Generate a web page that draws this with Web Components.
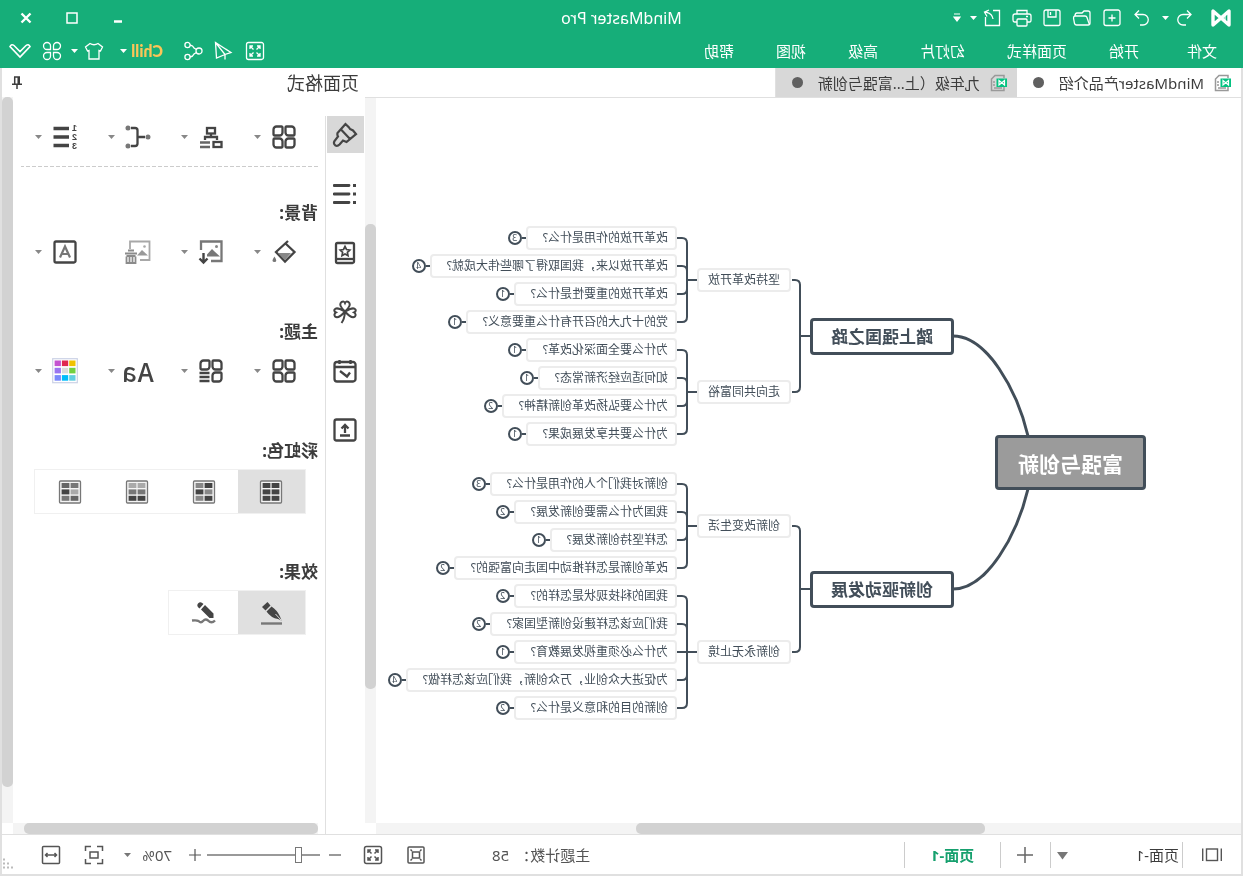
<!DOCTYPE html>
<html lang="zh-CN">
<head>
<meta charset="utf-8">
<title>MindMaster Pro</title>
<style>
  html, body { margin: 0; height: 100%; overflow: hidden; }
  body {
    font-family: "Noto Sans", "Noto Sans CJK SC", sans-serif;
    font-size: 15px; line-height: 20px; color: #3c3c3c; background: #fff;
    --green: #16ae79; --line: #e0e0e0; --track: #f4f4f4; --thumb: #d2d2d2; --ink: #424e59; --icon: #444;
  }
</style>
</head>
<body>
<mm-app></mm-app>

<script>
const sq = (x, y, r) => {
  const c = { tl: 'M1 0H6A3 3 0 0 1 9 3V8A1 1 0 0 1 8 9H3A3 3 0 0 1 0 6V1A1 1 0 0 1 1 0Z',
              tr: 'M3 0H8A1 1 0 0 1 9 1V6A3 3 0 0 1 6 9H1A1 1 0 0 1 0 8V3A3 3 0 0 1 3 0Z' }[r];
  return `<path transform="translate(${x} ${y})" d="${c}"/>`;
};
const swatches = (cells) => `<rect x="1.5" y="1" width="21" height="22" rx="1" fill="#f4f4f4" stroke="#777" stroke-width="1.3"/>` +
  cells.map((c, i) => `<rect x="${i % 2 ? 12.6 : 3.6}" y="${3 + Math.floor(i / 2) * 6.4}" width="7.8" height="5" fill="${c}" stroke="none"/>`).join('');
const palette = ['#f0c200', '#e0284f', '#c452d0', '#72d040', '#dcdcdc', '#9a74f0', '#62cfe0', '#00bdfb', '#7a88fb'];

/* name: [width, height, markup] */
const ICONS = {
  logo: [22, 20, '<path d="M3 3V17L19 3V17Z" stroke-width="3.4" stroke-linejoin="round"/><path d="M6 6V14L9.5 10.5Z" fill="currentColor" stroke="none" opacity=".6"/>'],
  undo: [20, 20, '<path d="M7 2.5L3 6.5L7 10.5M3 6.5H11A5 5 0 0 1 11 17H8"/>'],
  redo: [20, 20, '<path d="M13 2.5L17 6.5L13 10.5M17 6.5H9A5 5 0 0 0 9 17H12"/>'],
  create: [20, 20, '<rect x="2" y="2" width="16" height="15.5" rx="2"/><path d="M10 6.5V13.5M6.5 10H13.5"/>'],
  open: [20, 20, '<path d="M2 15V5Q2 3 4 3H8L10 5H15Q17 5 17 8"/><path d="M4 17H15.5Q17 17 17.5 15.5L18.5 10Q18.5 8 17 8H7Q5.5 8 5 9.5L3.5 14Q2 17 4 17ZM2 15Q2 17 4 17"/>'],
  save: [20, 20, '<path d="M4 2H16Q18 2 18 4V16Q18 17.5 16.5 17.5H3.5Q2 17.5 2 16V4Q2 2 4 2ZM6 2V9H14V2M11.5 4V7"/>'],
  print: [20, 20, '<path d="M5 6V2.5H15V6M5 14H2.5Q1 14 1 12V8Q1 6 3 6H17Q19 6 19 8V12Q19 14 17.5 14H15"/><rect x="5" y="11" width="10" height="7" rx="1"/><path d="M4 8.5H6"/>'],
  exporting: [20, 20, '<path d="M9 2.5H2.5V17.5H16.5V9"/><path d="M9 11Q10 5 17 4M13 2L17.5 4L15 8.5"/>'],
  caret: [8, 6, '<path d="M0 1H7L3.5 5Z" fill="currentColor" stroke="none"/>'],
  bigcaret: [12, 10, '<path d="M0 1H11L5.5 8.5Z" fill="currentColor" stroke="none"/>'],
  more: [8, 10, '<path d="M1 1H7M1 4H7L4 8Z" fill="currentColor" stroke-width="1.2"/>'],
  min: [12, 12, '<path d="M2 9.5H10" stroke-width="2.5"/>'],
  max: [12, 12, '<rect x="1" y="1" width="10" height="10" stroke-width="1.5"/>'],
  close: [12, 12, '<path d="M1.5 1.5L10.5 10.5M10.5 1.5L1.5 10.5" stroke-width="2.4"/>'],
  full: [20, 20, '<rect x="1.5" y="1.5" width="17" height="17" rx="2"/><path d="M5 8V5H8M12 5H15V8M15 12V15H12M8 15H5V12M5 5L8.5 8.5M15 5L11.5 8.5M15 15L11.5 11.5M5 15L8.5 11.5"/>'],
  send: [20, 20, '<path d="M17.5 1.5L2 11.5L8 13.5L16.5 17ZM17.5 1.5L8 13.5V18.5"/>'],
  share: [20, 20, '<circle cx="15.5" cy="4" r="2.6"/><circle cx="4" cy="10" r="3"/><circle cx="15.5" cy="16" r="2.6"/><path d="M6.5 8.5L9 7Q10 4.5 13 4M6.5 11.5L9 13Q10 15.5 13 16"/>'],
  shirt: [20, 20, '<path d="M6 2.5Q10 5 14 2.5L18.5 6L16.5 10L15 9.5V18H5V9.5L3.5 10L1.5 6Z"/>'],
  clover: [20, 20, '<path d="M8.5 8.5H5A3.5 3.5 0 1 1 8.5 5ZM11.5 8.5V5A3.5 3.5 0 1 1 15 8.5ZM8.5 11.5V15A3.5 3.5 0 1 1 5 11.5ZM11.5 11.5H15A3.5 3.5 0 1 1 11.5 15Z"/>'],
  chevron: [24, 20, '<path d="M2 5.5Q3.5 2.5 6 4.5L12 10.5L18 4.5Q20.5 2.5 22 5.5L12 16Z" stroke-width="1.6"/>'],
  doc: [18, 18, '<path d="M4 4V1.5H13L16.5 5V16.5H4V13" stroke="#999" stroke-width="1.5"/><path d="M13 8H15M13 11H15M6 14H14" stroke="#999"/><rect x="1" y="4.5" width="10.5" height="8.5" fill="#04c281" stroke="none"/><path d="M3.5 11V6.5L9 11V6.5Z" stroke="#fff" stroke-width="1.2"/>'],
  pin: [12, 14, '<path d="M3 1H9M4 1V8M8.3 1V8M1 8.3H11M6 8V13" stroke-width="1.5"/><path d="M4.3 1V8" stroke-width="2.5"/>'],
  brush: [26, 26, '<path d="M12.5 2L20.5 11Q21 13 20 14.5L23.5 19Q25 22 22.5 23.5Q20.5 24.5 18.5 22.5L15 18.5L11.5 20L2 12L5 8.5L8 7L9 5.5Z M17 7.5L8 17" stroke-width="2.2"/>'],
  list: [24, 24, '<path d="M8 3.5H23M8 12H23M8 20.5H23" stroke-width="2.8" stroke-linecap="round"/><path d="M1 3.5H4M1 12H4M1 20.5H4" stroke-width="3"/>'],
  book: [24, 24, '<rect x="3" y="2" width="18" height="20" rx="1.5"/><path d="M3 18H21"/><path d="M12 5.5L13.5 8.5L16.8 9L14.4 11.3L15 14.6L12 13L9 14.6L9.6 11.3L7.2 9L10.5 8.5Z" stroke-width="1.7"/>'],
  leaf: [24, 24, '<path d="M12 11.5C7.5 7.5 6 4 8.5 2Q11 .8 12 3Q13 .8 15.5 2C18 4 16.5 7.5 12 11.5ZM12 11.5C17 9 20.5 7 22.5 9.5Q23.3 11.5 21 12.5Q23.5 14 22 16.5C19.5 18.5 15 15 12 11.5ZM12 11.5C7 9 3.5 7 1.5 9.5Q.7 11.5 3 12.5Q.5 14 2 16.5C4.5 18.5 9 15 12 11.5ZM12 12Q12.5 19 15.5 23" stroke-width="2"/>'],
  calendar: [24, 24, '<rect x="1.5" y="3" width="21" height="19.5" rx="2.5"/><path d="M1.5 8H22.5M6.5 1V5M17.5 1V5M7 13.5L10 17.5L17 12"/>'],
  upload: [24, 24, '<rect x="1.5" y="1.5" width="21" height="21" rx="2"/><path d="M7 17.5H17M12 15V8M8.5 10.5L12 7L15.5 10.5"/>'],
  squares: [24, 24, sq(1.5, 1.5, 'tr') + sq(13.5, 1.5, 'tl') + sq(1.5, 13.5, 'tl') + sq(13.5, 13.5, 'tr')],
  squaresList: [24, 24, sq(1.5, 1.5, 'tr') + sq(13.5, 1.5, 'tl') + sq(1.5, 13.5, 'tl') + '<path d="M13.5 14H23.5M13.5 18H23.5M13.5 22H23.5"/>'],
  org: [24, 24, '<rect x="8" y="3" width="8" height="5.5"/><path d="M12 8.5V12M6 15V12H18V15"/><rect x="1.5" y="17" width="8" height="5"/><path d="M13 17.5H23M13 22H23" stroke="#666"/>'],
  bracket: [26, 24, '<path d="M6 12H13M20 3H16Q13.5 3 13.5 5.5V18.5Q13.5 21 16 21H20"/><g fill="#777" stroke="none"><circle cx="3" cy="12" r="2.5"/><circle cx="23" cy="3" r="2.5"/><circle cx="23" cy="21" r="2.5"/></g>'],
  numbers: [26, 28, '<path d="M9 5.5H24.5M9 14H24.5M9 22.5H24.5" stroke-width="3.4"/><g fill="currentColor" stroke="none" font-size="9" font-weight="700" font-family="Liberation Sans, sans-serif"><text x="1" y="8">1</text><text x="1" y="17">2</text><text x="1" y="26">3</text></g>'],
  bucket: [26, 26, '<path d="M9 2L21 13L12 22.5L2.5 13L11.5 4.5"/><path d="M6 14H19L12 21Z" fill="#888" stroke="none"/><path d="M22.5 17.5Q26.5 23 22.5 23Q19 23 22.5 17.5Z" fill="#777" stroke="none"/>'],
  picture: [26, 26, '<path d="M13 22H2.5V2.5H23V11" stroke="#777"/><path d="M4 17.5L10 12L12 10L17 15.5V17.5Z" fill="#777" stroke="none"/><circle cx="7.5" cy="7.5" r="1.5" fill="#888" stroke="none"/><path d="M20.5 14V23M16.5 19.5L20.5 23.5L24.5 19.5" stroke-width="2.4"/>'],
  pictureDel: [28, 26, '<g opacity=".85"><path d="M12 21H2.5V2.5H22V10" stroke="#999" stroke-width="1.8"/><path d="M4 16.5L10 11L15 16.5Z" fill="#888" stroke="none"/><circle cx="7.5" cy="7.5" r="1.3" fill="#999" stroke="none"/><path d="M15 14.5H27M18 11.5H24M16.5 17.5V24H25.5V17.5M19.5 17V24M22.5 17V24M16.5 17H25.5" stroke="#777" stroke-width="1.8"/></g>'],
  boxA: [24, 24, '<rect x="1.5" y="1.5" width="21" height="21" rx="1.5"/><path d="M7 17.5L12 6.5L17 17.5M9 14H15" stroke="#777" stroke-width="2.2"/>'],
  colors: [26, 26, '<rect x=".7" y=".7" width="24.6" height="24" fill="#fff" stroke="#ccd2e6" stroke-width="1.2"/>' + palette.map((c, i) => `<rect x="${2.5 + (i % 3) * 7.3}" y="${2.5 + Math.floor(i / 3) * 7.3}" width="6.3" height="5.6" fill="${c}" stroke="none"/>`).join('')],
  rainbow1: [24, 24, swatches(['#444', '#444', '#444', '#444', '#444', '#444'])],
  rainbow2: [24, 24, swatches(['#444', '#888', '#888', '#444', '#444', '#888'])],
  rainbow3: [24, 24, swatches(['#aaa', '#aaa', '#777', '#777', '#444', '#444'])],
  rainbow4: [24, 24, swatches(['#777', '#666', '#aaa', '#444', '#666', '#777'])],
  pen: [26, 26, '<path d="M2 23.5H23" stroke="#777" stroke-width="2.4"/><g fill="currentColor" stroke="none"><path d="M13.5 5.5L16.5 2L22 7L18.5 10.5Z"/><path d="M12.5 6.5L17.5 11.5Q13 18 6 19L2.5 20.5L4 16.5Q7 10 12.5 6.5Z"/></g><path d="M3 20L8.5 14" stroke="#e0e0e0" stroke-width="1"/>'],
  pencil: [28, 26, '<path d="M3 20.5Q6.5 24 10 20.5Q12.5 18.5 15 21Q17 23.5 19.5 21Q21 20 26 20.5" stroke="#777" stroke-width="2.4"/><path d="M4.5 17.5V13.5L13 5L17 9.5L8.5 18H4.5ZM14.5 4Q17.5 1 20 3.5Q22 6 18.5 8.5Z" fill="currentColor" stroke="none"/>'],
  outline: [22, 16, '<rect x="5.5" y="2" width="11" height="11.5" stroke-width="1.4"/><path d="M1.7 1.5V14M20.3 1.5V14" stroke-width="1.4"/>'],
  plus: [18, 18, '<path d="M9 1V17M1 9H17" stroke-width="1.5"/>'],
  plusSmall: [14, 14, '<path d="M7 1V13M1 7H13" stroke-width="1.2"/>'],
  minus: [14, 14, '<path d="M1 7H13" stroke-width="1.2"/>'],
  fit: [20, 20, '<rect x="2" y="2" width="16" height="16" rx="1"/><rect x="6.5" y="7" width="7" height="6"/><path d="M4.5 4.5L6 6M15.5 4.5L14 6M4.5 15.5L6 14M15.5 15.5L14 14"/>'],
  focus: [20, 20, '<path d="M1.5 6V1.5H7M13 1.5H18.5V6M18.5 14V18.5H13M7 18.5H1.5V14"/><rect x="6" y="7" width="8" height="6"/>'],
  width: [20, 20, '<rect x="1.5" y="1.5" width="17" height="17" rx="1"/><path d="M4.5 10H15.5M6.5 8L4.5 10L6.5 12M13.5 8L15.5 10L13.5 12"/>'],
  grip: [10, 12, '<path d="M8 1.5H10M4 5.5H6M8 5.5H10M0 9.5H2M4 9.5H6M8 9.5H10" stroke="#bbb" stroke-width="2"/>']
};

class Base extends HTMLElement {
  connectedCallback() {
    if (this.shadowRoot) return;
    this.attachShadow({ mode: 'open' }).innerHTML = `<style>
      *, *::before { box-sizing: border-box; }
      button, select, input { font: inherit; color: inherit; background: none; border: 0; margin: 0; padding: 0; border-radius: 0; }
      button { display: flex; align-items: center; justify-content: center; flex: none; white-space: nowrap; }
      ${this.css()}</style>${this.html()}`;
  }
  css() { return ':host { display: block; }'; }
  html() { return '<slot></slot>'; }
}
const def = (name, cls) => customElements.define(name, cls);
const ico = (n) => `<mm-icon name="${n}"></mm-icon>`;
const btn = (n, label, cls = '') => `<button type="button" class="${cls}" aria-label="${label}">${ico(n)}</button>`;

def('mm-icon', class extends Base {
  css() { return ':host { display: block; flex: none; } svg { display: block; stroke-width: var(--sw, 1.3px); }'; }
  html() {
    const n = this.getAttribute('name'), [w, h, body] = ICONS[n];
    return `<svg width="${w}" height="${h}" viewBox="0 0 ${w} ${h}" fill="none" stroke="currentColor" aria-hidden="true">${body}</svg>`;
  }
});

def('mm-titlebar', class extends Base {
  css() { return `
    :host { display: grid; grid-template-columns: 1fr auto 1fr; align-items: center; height: 36px; color: #fff; }
    .quick { display: flex; align-items: center; padding-left: 12px; }
    .quick button { width: 30px; height: 30px; }
    .quick .logo { width: 20px; margin-right: 12px; }
    .quick .drop { width: 8px; }
    .quick .drop + button { margin-left: 4px; }
    .quick .more { width: 16px; }
    h1 { margin: 0; font-size: 16px; line-height: 24px; font-weight: 400; }
    .win { display: flex; justify-content: flex-end; padding-right: 3px; }
    .win button { width: 46px; height: 32px; }`; }
  html() { return `
    <div class="quick"><button type="button" class="logo" aria-label="MindMaster">${ico('logo')}</button>
      ${btn('undo', '撤销')}${btn('caret', '撤销列表', 'drop')}${btn('redo', '恢复')}${btn('create', '新建')}${btn('open', '打开')}${btn('save', '保存')}${btn('print', '打印')}${btn('exporting', '导出')}${btn('caret', '导出列表', 'drop')}${btn('more', '更多', 'more')}</div>
    <h1>MindMaster Pro</h1>
    <div class="win">${btn('min', '最小化')}${btn('max', '最大化')}${btn('close', '关闭')}</div>`; }
});

def('mm-menubar', class extends Base {
  css() { return `
    :host { display: flex; align-items: center; justify-content: space-between; height: 32px; color: #fff; padding: 0 4px 2px 26px; }
    nav { display: flex; gap: 42px; }
    nav button:first-child { margin-right: 6px; }
    .tools { display: flex; align-items: center; }
    .tools button { width: 30px; height: 28px; }
    .tools .wide { width: 34px; }
    .tools .drop { width: 12px; }
    .tools .chill { width: 34px; margin-left: 15px; justify-content: flex-start; color: #fbc558; font-weight: 900; font-family: Lato, sans-serif; font-size: 16px; }
    .tools .shirt { width: 28px; margin-left: 9px; }
    .tools .last { width: 32px; }`; }
  html() { return `
    <nav>${['文件', '开始', '页面样式', '幻灯片', '高级', '视图', '帮助'].map(t => `<button type="button">${t}</button>`).join('')}</nav>
    <div class="tools">${btn('full', '全屏', 'wide')}${btn('send', '发送')}${btn('share', '分享')}<button type="button" class="chill">Chill</button>${btn('caret', '账户', 'drop')}${btn('shirt', '皮肤', 'shirt')}${btn('caret', '皮肤列表', 'drop')}${btn('clover', '应用', 'last')}${btn('chevron', '收起', 'last')}</div>`; }
});

def('mm-tab', class extends Base {
  css() { return `
    :host { display: block; flex: none; }
    button { height: 29px; padding: 0 16px 0 9px; gap: 10px; }
    :host([idle]) button { background: #d8d8d8; }
    :host([idle]) { border-right: 1px solid var(--line); }
    i { width: 11px; height: 11px; border-radius: 50%; background: #606060; margin-left: 5px; }`; }
  html() { return `<button type="button" role="tab" aria-selected="${!this.hasAttribute('idle')}">${ico('doc')}<span><slot></slot></span><i></i></button>`; }
});

def('mm-scrollbar', class extends Base {
  css() { return `
    :host { display: flex; background: var(--track); }
    :host([dir=v]) { flex-direction: column; width: 11px; }
    :host([dir=h]) { height: 11px; }
    .pre { flex: var(--pre) 1 0px; } .thumb { flex: var(--size) 1 0px; border-radius: 5px; background: var(--thumb); } .post { flex: var(--post) 1 0px; }`; }
  html() { return '<div class="pre"></div><div class="thumb"></div><div class="post"></div>'; }
});

def('mind-leaf', class extends Base {
  css() { return `
    :host { display: flex; align-items: center; height: 24px; font-size: 12px; line-height: 16px; color: var(--ink); white-space: nowrap; }
    .box { height: 24px; padding: 2px 15px 2px 7px; border: 2px solid #ececec; border-radius: 4px; background: #fff; }
    .dash { width: 4px; height: 2px; background: var(--ink); }
    .count { width: 14px; height: 14px; border: 2px solid var(--ink); border-radius: 50%; font-size: 9px; line-height: 10px; text-align: center; }`; }
  html() { return `<span class="box"><slot></slot></span><span class="dash"></span><span class="count">${this.getAttribute('n')}</span>`; }
});

def('mind-branch', class extends Base {
  css() { return `
    :host { display: flex; align-items: center; gap: 20px; color: var(--ink); white-space: nowrap; }
    .node { flex: none; width: 94px; height: 24px; border: 2px solid #ececec; border-radius: 4px; background: #fff; display: flex; align-items: center; justify-content: center; font-size: 12px; line-height: 16px; }
    :host([main]) { gap: 19px; }
    :host([main]) .node { width: 144px; height: 37px; border: 3px solid var(--ink); border-radius: 4px; font-size: 17px; line-height: 24px; font-weight: 700; font-family: "Noto Sans CJK SC", sans-serif; }
    /* centre on the two sub-topics when the lower one holds an extra leaf */
    :host([tail]) .node { margin-bottom: 14px; }
    .kids { display: flex; flex-direction: column; gap: 4px; }`; }
  html() { return `<div class="node">${this.getAttribute('label')}</div><div class="kids"><slot></slot></div>`; }
});

const MAP = [
  ['踏上强国之路', [
    ['坚持改革开放', [['改革开放的作用是什么?', 3], ['改革开放以来，我国取得了哪些伟大成就?', 4], ['改革开放的重要性是什么?', 1], ['党的十九大的召开有什么重要意义?', 1]]],
    ['走向共同富裕', [['为什么要全面深化改革?', 1], ['如何适应经济新常态?', 1], ['为什么要弘扬改革创新精神?', 2], ['为什么要共享发展成果?', 1]]]]],
  ['创新驱动发展', [
    ['创新改变生活', [['创新对我们个人的作用是什么?', 3], ['我国为什么需要创新发展?', 2], ['怎样坚持创新发展?', 1], ['改革创新是怎样推动中国走向富强的?', 2]]],
    ['创新永无止境', [['我国的科技现状是怎样的?', 2], ['我们应该怎样建设创新型国家?', 2], ['为什么必须重视发展教育?', 1], ['为促进大众创业，万众创新，我们应该怎样做?', 4], ['创新的目的和意义是什么?', 2]]]]]
];
/* Rounded bracket from (x, y) to every child centre in ys, ending at x2. */
const bracket = (x, y, trunk, x2, ys) => `M${x} ${y}H${trunk}` + ys.map(c =>
  Math.abs(c - y) < 2 ? `M${trunk} ${y}H${x2}` : `M${trunk} ${y}V${c < y ? c + 5 : c - 5}Q${trunk} ${c} ${trunk + 5} ${c}H${x2}`).join('');

def('mind-map', class extends Base {
  css() { return `
    :host { display: block; position: relative; overflow: hidden; background: #fff; }
    .stage { position: absolute; left: 95px; top: 128px; width: 760px; }
    svg { position: absolute; left: 0; top: 0; }
    .root { position: absolute; left: 0; top: 209px; width: 151px; height: 55px; border: 3px solid var(--ink); border-radius: 4px; background: #9b9b9b; color: #fff; display: flex; align-items: center; justify-content: center; font: 700 21px/28px "Noto Sans CJK SC", sans-serif; }
    .tree { position: relative; display: flex; flex-direction: column; gap: 26px; padding-left: 192px; }`; }
  html() {
    const s = (a, n) => Array.from({ length: n }, (_, i) => a + i * 28);
    const lines = bracket(433, 336, 443, 451, [280, 392]) + bracket(433, 589, 443, 451, [526, 652]) +
      bracket(546, 280, 556, 566, s(238, 4)) + bracket(546, 392, 556, 566, s(350, 4)) +
      bracket(546, 526, 556, 566, s(484, 4)) + bracket(546, 652, 556, 566, s(596, 5));
    return `<div class="stage">
      <svg width="600" height="494" viewBox="97 226 600 494" fill="none" stroke="#424e59" stroke-width="2" aria-hidden="true">
        <path stroke-width="3" d="M215 436C226 390 256 336 290 336M215 489C226 535 256 589 290 589"/><path d="${lines}"/></svg>
      <div class="root">富强与创新</div>
      <div class="tree">${MAP.map(([m, subs]) => `<mind-branch main ${subs[1][1].length > subs[0][1].length ? 'tail' : ''} label="${m}">${subs.map(([t, ls]) =>
        `<mind-branch label="${t}">${ls.map(([l, n]) => `<mind-leaf n="${n}">${l}</mind-leaf>`).join('')}</mind-branch>`).join('')}</mind-branch>`).join('')}</div>
    </div>`;
  }
});

def('mm-workspace', class extends Base {
  css() { return `
    :host { display: flex; flex-direction: column; flex: 1; min-width: 0; }
    .tabs { display: flex; border-bottom: 1px solid var(--line); }
    .view { flex: 1; display: grid; grid-template: 1fr 11px / 1fr 11px; min-height: 0; }
    .v { --pre: 126; --size: 465; --post: 134; } .h { --pre: 256; --size: 349; --post: 260; }`; }
  html() { return `
    <div class="tabs" role="tablist"><mm-tab>MindMaster产品介绍</mm-tab><mm-tab idle>九年级（上...富强与创新</mm-tab></div>
    <div class="view"><mind-map></mind-map><mm-scrollbar class="v" dir="v"></mm-scrollbar><mm-scrollbar class="h" dir="h"></mm-scrollbar></div>`; }
});

def('mm-tool', class extends Base {
  css() { return `
    :host { display: flex; align-items: center; width: 73px; height: 36px; color: var(--icon); --sw: 2.3px; }
    .main { width: 36px; height: 36px; margin-left: 16px; font: 500 26px/36px "Noto Sans CJK SC", sans-serif; }
    .drop { width: 14px; height: 36px; margin-left: 2px; color: #888; }`; }
  html() {
    const n = this.getAttribute('icon');
    return `<button type="button" class="main" aria-label="${this.title || n}">${n === 'Aa' ? 'Aa' : ico(n)}</button>${this.hasAttribute('plain') ? '' : btn('caret', '选项', 'drop')}`;
  }
});

def('mm-segment', class extends Base {
  css() { return `
    :host { display: flex; width: max-content; padding-right: 2px; border: 1px solid #f0f0f0; color: var(--icon); --sw: 2px; margin-left: 12px; }
    button { width: 67px; height: 43px; }
    button[aria-pressed=true] { background: #e0e0e0; }`; }
  html() { return this.getAttribute('icons').split(' ').map((n, i) => `<button type="button" aria-label="${n}" aria-pressed="${i === 0}">${ico(n)}</button>`).join(''); }
});

def('mm-panel', class extends Base {
  css() { return `
    :host { display: flex; flex-direction: column; flex: none; width: 363px; }
    header { display: flex; align-items: center; justify-content: space-between; height: 29px; padding: 0 9px 0 6px; }
    h2 { margin: 0; font-size: 18px; line-height: 26px; font-weight: 400; }
    .body { flex: 1; display: grid; grid-template: 1fr 11px / 40px 1fr 11px; min-height: 0; }
    aside { grid-row: span 2; margin-top: 19px; padding-left: 1px; border-right: 1px solid var(--line); display: flex; flex-direction: column; gap: 22px; color: var(--icon); --sw: 2.3px; }
    aside button { width: 37px; height: 37px; }
    aside button[aria-pressed=true] { background: #d8d8d8; }
    .content { padding: 22px 8px 0 7px; overflow: hidden; }
    .tools { display: flex; }
    hr { margin: 11px 0 0; border: 0; height: 1px; background: repeating-linear-gradient(90deg, #ccc 0 4px, transparent 4px 6px); }
    h3 { margin: 0; font-size: 17px; line-height: 24px; font-weight: 700; }
    section { margin-top: 50px; }
    hr + section { margin-top: 34px; }
    section .tools { margin-top: 9px; }
    mm-segment { margin-top: 6px; }
    .fx { margin-top: 46px; }
    .v { --pre: 0; --size: 690; --post: 36; }
    .h { --pre: 0; --size: 294; --post: 11; margin-left: 7px; }`; }
  html() {
    const side = [['brush', '页面格式'], ['list', '大纲'], ['book', '图标'], ['leaf', '剪贴画'], ['calendar', '任务'], ['upload', '附件']];
    const row = (a) => `<div class="tools">${a.map(([n, t, p]) => `<mm-tool icon="${n}" title="${t}" ${p ? 'plain' : ''}></mm-tool>`).join('')}</div>`;
    return `
    <header><h2>页面格式</h2>${btn('pin', '固定')}</header>
    <div class="body">
      <aside>${side.map(([n, t], i) => `<button type="button" aria-label="${t}" aria-pressed="${i === 0}">${ico(n)}</button>`).join('')}</aside>
      <div class="content">
        ${row([['squares', '主题布局'], ['org', '结构'], ['bracket', '连线'], ['numbers', '编号']])}
        <hr>
        <section><h3>背景:</h3>${row([['bucket', '背景颜色'], ['picture', '背景图片'], ['pictureDel', '删除图片', 1], ['boxA', '水印']])}</section>
        <section><h3>主题:</h3>${row([['squares', '主题样式'], ['squaresList', '主题列表'], ['Aa', '字体'], ['colors', '颜色']])}</section>
        <section><h3>彩虹色:</h3><mm-segment icons="rainbow1 rainbow2 rainbow3 rainbow4"></mm-segment></section>
        <section class="fx"><h3>效果:</h3><mm-segment icons="pen pencil"></mm-segment></section>
      </div>
      <mm-scrollbar class="v" dir="v"></mm-scrollbar>
      <mm-scrollbar class="h" dir="h"></mm-scrollbar>
    </div>`;
  }
});

def('mm-statusbar', class extends Base {
  css() { return `
    :host { display: flex; align-items: center; justify-content: space-between; height: 40px; border-top: 1px solid var(--line); color: #555; --sw: 1.5px; }
    .pages, .zoom { display: flex; align-items: center; }
    .rule { width: 1px; height: 26px; background: #ccc; flex: none; }
    .outline { width: 58px; }
    .pick { position: relative; width: 131px; color: #3c3c3c; }
    select { appearance: none; width: 100%; height: 28px; display: block; }
    .pick select { padding-left: 3px; }
    .pick mm-icon { position: absolute; right: 5px; top: 10px; color: #777; pointer-events: none; }
    .add { width: 49px; height: 30px; color: #666; }
    .page { width: 95px; height: 30px; color: #16a06e; font-weight: 700; }
    .zoom button { height: 30px; }
    .count { margin-right: 54px; display: flex; gap: 6px; color: #555; }
    .sq { width: 43px; }
    .step { width: 24px; }
    .out { margin: 0 3px 0 5px; }
    input { appearance: none; width: 113px; height: 20px; background: linear-gradient(#999, #999) center / 100% 2px no-repeat; }
    input::-webkit-slider-thumb { appearance: none; box-sizing: border-box; width: 7px; height: 16px; border: 1px solid #777; background: #fff; }
    .ratio { position: relative; width: 53px; margin: 0 3px 0 11px; }
    .ratio mm-icon { position: absolute; right: 4px; top: 11px; color: #777; pointer-events: none; }
    .grip { align-self: flex-end; margin: 0 1px 0 17px; }`; }
  html() { return `
    <div class="pages">${btn('outline', '页面列表', 'outline')}<span class="rule"></span>
      <span class="pick"><select aria-label="页面"><option>页面-1</option></select>${ico('bigcaret')}</span><span class="rule"></span>
      ${btn('plus', '添加页面', 'add')}<span class="rule"></span><button type="button" class="page">页面-1</button><span class="rule"></span></div>
    <div class="zoom"><span class="count"><span>主题计数：</span><span>58</span></span>
      ${btn('fit', '适合页面', 'sq')}${btn('full', '全屏', 'sq')}${btn('minus', '缩小', 'step out')}
      <input type="range" min="10" max="300" value="58" aria-label="缩放">${btn('plusSmall', '放大', 'step')}
      <span class="ratio"><select aria-label="缩放比例"><option>70%</option></select>${ico('caret')}</span>
      ${btn('focus', '聚焦', 'sq')}${btn('width', '适合宽度', 'sq')}<span class="grip">${ico('grip')}</span></div>`; }
});

/* The whole window is drawn as its mirror image. */
def('mm-app', class extends Base {
  css() { return `
    :host { display: flex; flex-direction: column; height: 100vh; transform: scaleX(-1); }
    .top { background: var(--green); }
    .frame { flex: 1; min-height: 0; display: flex; flex-direction: column; border: solid var(--line); border-width: 0 2px 2px; }
    main { flex: 1; min-height: 0; display: flex; }`; }
  html() { return `
    <div class="top"><mm-titlebar></mm-titlebar><mm-menubar></mm-menubar></div>
    <div class="frame"><main><mm-workspace></mm-workspace><mm-panel></mm-panel></main><mm-statusbar></mm-statusbar></div>`; }
});
</script>
</body>
</html>
